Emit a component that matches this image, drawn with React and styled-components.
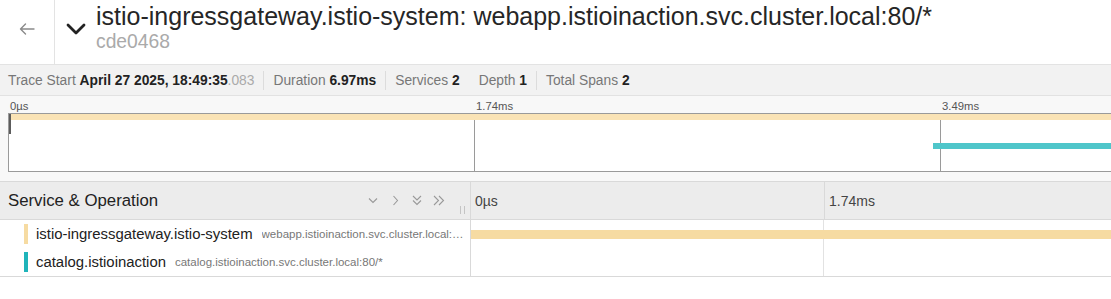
import React from "react";
import styled, { createGlobalStyle } from "styled-components";

const GlobalStyle = createGlobalStyle`
  html, body { margin: 0; padding: 0; background: #fff; overflow: hidden; }
  body { font-family: "Liberation Sans", Arial, Helvetica, sans-serif; color: #222; }
  * { box-sizing: border-box; }
`;

/* scale of the visible window: one tick = 1.74ms */
const TICK_MS = 1.7425;
const MINI_TICK_PX = 466;
const MAIN_TICK_PX = 353;

const Page = styled.div`
  width: 1111px;
  overflow: hidden;
`;

/* ---------- header ---------- */
const Header = styled.header`
  display: flex;
  height: 65px;
  border-bottom: 1px solid #e3e3e3;
  background: #fff;
`;

const BackButton = styled.button`
  width: 55px;
  flex: none;
  border: 0;
  border-right: 1px solid #e3e3e3;
  background: transparent;
  display: flex;
  justify-content: center;
  align-items: flex-start;
  padding: 23px 0 0 0;
  cursor: pointer;
`;

const TitleArea = styled.div`
  display: flex;
  align-items: flex-start;
  padding-left: 11px;
  min-width: 0;
`;

const Caret = styled.svg`
  margin-top: 23px;
  margin-right: 10px;
  flex: none;
`;

const TitleBlock = styled.div`
  display: flex;
  flex-direction: column;
  padding-top: 2px;
`;

const Title = styled.h1`
  margin: 0;
  font-size: 25px;
  line-height: 29px;
  font-weight: 400;
  color: #262626;
  white-space: nowrap;
`;

const TraceId = styled.div`
  font-size: 19.3px;
  line-height: 22px;
  color: #aaa;
`;

/* ---------- stats bar ---------- */
const StatsBar = styled.div`
  display: flex;
  align-items: center;
  height: 31px;
  padding-left: 8px;
  background: #f2f2f2;
  border-bottom: 1px solid #e2e2e2;
  font-size: 13.8px;
  color: #777;
  white-space: nowrap;
`;

const Stat = styled.span``;

const Strong = styled.b`
  color: #222;
  font-weight: 700;
`;

const Faded = styled.span`
  color: #aaa;
`;

const Divider = styled.span`
  width: 1px;
  height: 19px;
  margin: 0 9px;
  background: ${(p) => (p.$hidden ? "transparent" : "#dcdcdc")};
`;

/* ---------- minimap ---------- */
const Minimap = styled.section`
  background: #f8f8f8;
  padding: 0 0 9px 8px;
`;

const TickRow = styled.div`
  display: grid;
  grid-auto-flow: column;
  grid-auto-columns: ${MINI_TICK_PX}px;
  height: 17px;
  padding-left: 2px;
  overflow: hidden;
`;

const MiniTick = styled.div`
  height: 17px;
`;

const MiniLabel = styled.span`
  font-size: 11.3px;
  line-height: 17px;
  color: #555;
`;

const MiniCanvas = styled.div`
  position: relative;
  height: 59px;
  border: 1px solid #9a9a9a;
  border-right: 0;
  background-color: #fff;
  background-image: linear-gradient(to right, #9a9a9a 1px, transparent 1px);
  background-size: ${MINI_TICK_PX}px 100%;
  background-position: -1px 0;
  display: flex;
  flex-direction: column;
  overflow: hidden;
`;

const MiniRow = styled.div`
  flex: 1;
  display: flex;
  align-items: flex-start;
`;

const MiniBar = styled.div`
  flex: none;
  height: 6px;
  background: ${(p) => p.$color};
`;

const Handle = styled.div`
  position: absolute;
  left: -1px;
  top: 0;
  width: 3px;
  height: 20px;
  background: #5c5c5c;
`;

/* ---------- trace table ---------- */
const TableHeader = styled.div`
  display: flex;
  height: 39px;
  border-top: 1px solid #d9d9d9;
  border-bottom: 1px solid #d9d9d9;
  background: #ececec;
`;

const NameHeader = styled.div`
  width: 471px;
  flex: none;
  display: flex;
  align-items: center;
  padding-left: 8px;
  border-right: 1px solid #d9d9d9;
`;

const HeaderTitle = styled.div`
  flex: 1;
  font-size: 16.8px;
  color: #222;
`;

const IconGroup = styled.div`
  display: flex;
  align-items: center;
`;

const IconButton = styled.span`
  width: 22px;
  height: 22px;
  display: flex;
  align-items: center;
  justify-content: center;
`;

const Resizer = styled.span`
  align-self: flex-end;
  width: 5px;
  height: 8px;
  margin: 0 5px 5px 10px;
  border-left: 1px solid #c4c4c4;
  border-right: 1px solid #c4c4c4;
`;

const TimelineHeader = styled.div`
  flex: 1;
  display: grid;
  grid-auto-flow: column;
  grid-auto-columns: ${MAIN_TICK_PX}px;
  overflow: hidden;
`;

const TimeTick = styled.div`
  display: flex;
  align-items: center;
  padding-left: 4px;
  border-left: ${(p) => (p.$first ? "0" : "1px solid #d9d9d9")};
`;

const TimeLabel = styled.span`
  font-size: 14px;
  color: #444;
`;

const Rows = styled.div`
  border-bottom: 1px solid #d9d9d9;
`;

const Row = styled.div`
  display: flex;
  height: 28px;
`;

const NameCell = styled.div`
  width: 471px;
  flex: none;
  display: flex;
  align-items: center;
  padding: 0 6px 0 24px;
  border-right: 1px solid #d9d9d9;
  min-width: 0;
`;

const ServiceColor = styled.span`
  flex: none;
  width: 4px;
  height: 20px;
  margin-right: 8px;
  background: ${(p) => p.$color};
`;

const ServiceName = styled.span`
  flex: none;
  font-size: 14.9px;
  color: #222;
  white-space: nowrap;
`;

const OpName = styled.span`
  margin-left: 9px;
  font-size: 11.5px;
  color: #777;
  white-space: nowrap;
  overflow: hidden;
  text-overflow: ellipsis;
  min-width: 0;
`;

const TimelineCell = styled.div`
  flex: 1;
  display: flex;
  align-items: center;
  overflow: hidden;
  background-image: linear-gradient(to right, #e2e2e2 1px, transparent 1px);
  background-size: ${MAIN_TICK_PX}px 100%;
  background-position: -1px 0;
`;

const SpanBar = styled.div`
  flex: none;
  height: 9px;
  background: ${(p) => p.$color};
`;

/* ---------- icons ---------- */
const BackArrow = () => (
  <svg width="16" height="12" viewBox="0 0 16 12" fill="none" stroke="#8a8a8a" strokeWidth="1.4" strokeLinecap="round" strokeLinejoin="round">
    <path d="M15 6H1.5M6.5 1L1.5 6l5 5" />
  </svg>
);

const ChevDown = () => (
  <svg width="10" height="7" viewBox="0 0 10 7" fill="none" stroke="#999" strokeWidth="1.1">
    <path d="M1 1.5l4 4 4-4" />
  </svg>
);
const ChevRight = () => (
  <svg width="7" height="11" viewBox="0 0 7 11" fill="none" stroke="#999" strokeWidth="1.1">
    <path d="M1.5 1l4 4.5-4 4.5" />
  </svg>
);
const DoubleDown = () => (
  <svg width="10" height="11" viewBox="0 0 10 11" fill="none" stroke="#999" strokeWidth="1.1">
    <path d="M1 1l4 4 4-4M1 5.5l4 4 4-4" />
  </svg>
);
const DoubleRight = () => (
  <svg width="12" height="11" viewBox="0 0 12 11" fill="none" stroke="#999" strokeWidth="1.1">
    <path d="M1 1l4.5 4.5L1 10M6 1l4.5 4.5L6 10" />
  </svg>
);

const YELLOW = "#f6dba2";
const MINI_YELLOW = "#fae3b5";
const TEAL = "#1fb4ba";
const MINI_TEAL = "#4fc6ca";

const spans = [
  {
    service: "istio-ingressgateway.istio-system",
    op: "webapp.istioinaction.svc.cluster.local:80/*",
    color: YELLOW,
    mini: MINI_YELLOW,
    startMs: 0,
    durMs: 6.97,
  },
  {
    service: "catalog.istioinaction",
    op: "catalog.istioinaction.svc.cluster.local:80/*",
    color: TEAL,
    mini: MINI_TEAL,
    startMs: 3.455,
    durMs: 3.4,
  },
];

const miniTicks = ["0µs", "1.74ms", "3.49ms"];
const mainTicks = ["0µs", "1.74ms"];

const px = (ms, tickPx) => `${(ms / TICK_MS) * tickPx}px`;

export default function App() {
  return (
    <Page>
      <GlobalStyle />
      <Header>
        <BackButton aria-label="back">
          <BackArrow />
        </BackButton>
        <TitleArea>
          <Caret width="20" height="12" viewBox="0 0 20 12" fill="none" stroke="#222" strokeWidth="2.8" strokeLinecap="round" strokeLinejoin="round">
            <path d="M2 2l8 8 8-8" />
          </Caret>
          <TitleBlock>
            <Title>istio-ingressgateway.istio-system: webapp.istioinaction.svc.cluster.local:80/*</Title>
            <TraceId>cde0468</TraceId>
          </TitleBlock>
        </TitleArea>
      </Header>

      <StatsBar>
        <Stat>
          Trace Start <Strong>April 27 2025, 18:49:35</Strong>
          <Faded>.083</Faded>
        </Stat>
        <Divider />
        <Stat>
          Duration <Strong>6.97ms</Strong>
        </Stat>
        <Divider />
        <Stat>
          Services <Strong>2</Strong>
        </Stat>
        <Divider $hidden />
        <Stat>
          Depth <Strong>1</Strong>
        </Stat>
        <Divider />
        <Stat>
          Total Spans <Strong>2</Strong>
        </Stat>
      </StatsBar>

      <Minimap>
        <TickRow>
          {miniTicks.map((t) => (
            <MiniTick key={t}>
              <MiniLabel>{t}</MiniLabel>
            </MiniTick>
          ))}
        </TickRow>
        <MiniCanvas>
          {spans.map((s) => (
            <MiniRow key={s.service}>
              <MiniBar
                $color={s.mini}
                style={{ marginLeft: px(s.startMs, MINI_TICK_PX), width: px(s.durMs, MINI_TICK_PX) }}
              />
            </MiniRow>
          ))}
          <Handle />
        </MiniCanvas>
      </Minimap>

      <TableHeader>
        <NameHeader>
          <HeaderTitle>Service &amp; Operation</HeaderTitle>
          <IconGroup>
            <IconButton><ChevDown /></IconButton>
            <IconButton><ChevRight /></IconButton>
            <IconButton><DoubleDown /></IconButton>
            <IconButton><DoubleRight /></IconButton>
          </IconGroup>
          <Resizer />
        </NameHeader>
        <TimelineHeader>
          {mainTicks.map((t, i) => (
            <TimeTick key={t} $first={i === 0}>
              <TimeLabel>{t}</TimeLabel>
            </TimeTick>
          ))}
        </TimelineHeader>
      </TableHeader>

      <Rows>
        {spans.map((s) => (
          <Row key={s.service}>
            <NameCell>
              <ServiceColor $color={s.color} />
              <ServiceName>{s.service}</ServiceName>
              <OpName>{s.op}</OpName>
            </NameCell>
            <TimelineCell>
              <SpanBar
                $color={s.color}
                style={{ marginLeft: px(s.startMs, MAIN_TICK_PX), width: px(s.durMs, MAIN_TICK_PX) }}
              />
            </TimelineCell>
          </Row>
        ))}
      </Rows>
    </Page>
  );
}
